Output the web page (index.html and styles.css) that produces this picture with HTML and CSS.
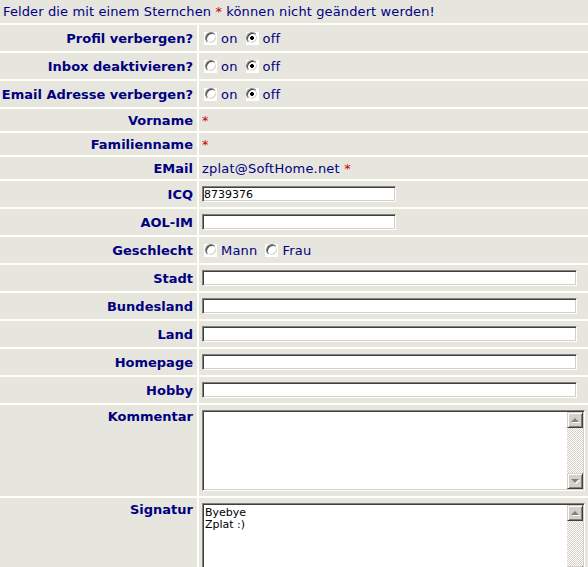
FILE: index.html
```html
<!DOCTYPE html>
<html lang="de">
<head>
    <meta charset="UTF-8">
    <title>Profil bearbeiten</title>
    <link rel="stylesheet" href="styles.css">
</head>
<body>
    <form class="profile">
        <div class="note"><span>Felder die mit einem Sternchen <span class="req">*</span> können nicht geändert werden!</span></div>

        <div class="row">
            <div class="key">Profil verbergen?</div>
            <div class="val">
                <label class="opt"><span class="rb"><input type="radio" name="hideprofile"></span>on</label>
                <label class="opt"><span class="rb"><input type="radio" name="hideprofile" checked></span>off</label>
            </div>
        </div>
        <div class="row">
            <div class="key">Inbox deaktivieren?</div>
            <div class="val">
                <label class="opt"><span class="rb"><input type="radio" name="noinbox"></span>on</label>
                <label class="opt"><span class="rb"><input type="radio" name="noinbox" checked></span>off</label>
            </div>
        </div>
        <div class="row">
            <div class="key">Email Adresse verbergen?</div>
            <div class="val">
                <label class="opt"><span class="rb"><input type="radio" name="hidemail"></span>on</label>
                <label class="opt"><span class="rb"><input type="radio" name="hidemail" checked></span>off</label>
            </div>
        </div>

        <div class="row short">
            <div class="key">Vorname</div>
            <div class="val"><span class="req">*</span></div>
        </div>
        <div class="row short">
            <div class="key">Familienname</div>
            <div class="val"><span class="req">*</span></div>
        </div>
        <div class="row short">
            <div class="key">EMail</div>
            <div class="val"><span>zplat@SoftHome.net <span class="req">*</span></span></div>
        </div>

        <div class="row">
            <div class="key">ICQ</div>
            <div class="val"><input class="field narrow" type="text" value="8739376"></div>
        </div>
        <div class="row">
            <div class="key">AOL-IM</div>
            <div class="val"><input class="field narrow" type="text"></div>
        </div>
        <div class="row">
            <div class="key">Geschlecht</div>
            <div class="val">
                <label class="opt"><span class="rb"><input type="radio" name="sex"></span>Mann</label>
                <label class="opt"><span class="rb"><input type="radio" name="sex"></span>Frau</label>
            </div>
        </div>
        <div class="row">
            <div class="key">Stadt</div>
            <div class="val"><input class="field wide" type="text"></div>
        </div>
        <div class="row">
            <div class="key">Bundesland</div>
            <div class="val"><input class="field wide" type="text"></div>
        </div>
        <div class="row">
            <div class="key">Land</div>
            <div class="val"><input class="field wide" type="text"></div>
        </div>
        <div class="row">
            <div class="key">Homepage</div>
            <div class="val"><input class="field wide" type="text"></div>
        </div>
        <div class="row">
            <div class="key">Hobby</div>
            <div class="val"><input class="field wide" type="text"></div>
        </div>

        <div class="row top">
            <div class="key">Kommentar</div>
            <div class="val">
                <div class="area">
                    <textarea></textarea>
                    <div class="sbar"><span class="sbtn up"></span><span class="sbtn down"></span></div>
                </div>
            </div>
        </div>
        <div class="row top">
            <div class="key">Signatur</div>
            <div class="val">
                <div class="area">
                    <textarea>Byebye
Zplat :)</textarea>
                    <div class="sbar"><span class="sbtn up"></span><span class="sbtn down"></span></div>
                </div>
            </div>
        </div>
    </form>
</body>
</html>
```

FILE: styles.css
```css
body {
    margin: 0;
    background-color: #fffff7;
    font-family: "DejaVu Sans", Verdana, sans-serif;
    font-size: 13px;
    color: #000080;
}
.profile {
    display: flex;
    flex-direction: column;
    gap: 2px;
}
.note {
    background: #e6e5de;
    height: 23px;
    padding-left: 3px;
    display: flex;
    align-items: center;
    letter-spacing: 0.12px;
}
.req {
    color: #cc0000;
}
.row {
    display: grid;
    grid-template-columns: 197px 1fr;
    column-gap: 2px;
    min-height: 26px;
}
.row.short {
    min-height: 22px;
}
.key, .val {
    background: #e6e5de;
    display: flex;
    align-items: center;
}
.key {
    justify-content: flex-end;
    padding-right: 4px;
    font-weight: bold;
}
.val {
    padding-left: 3px;
    letter-spacing: 0.2px;
}
.row.top .key {
    align-items: flex-start;
    padding-top: 4px;
}
.row.top .val {
    align-items: flex-start;
    padding-top: 5px;
    padding-bottom: 5px;
}

/* old windows style radio buttons */
.opt {
    display: inline-flex;
    align-items: center;
    margin-right: 6px;
}
.rb {
    display: inline-flex;
    align-items: center;
    justify-content: center;
    width: 13px;
    height: 13px;
    margin: 0 4px 0 2px;
    background: #fff;
}
.rb input {
    appearance: none;
    -webkit-appearance: none;
    margin: 0;
    width: 12px;
    height: 12px;
    box-sizing: border-box;
    border-radius: 50%;
    border: 1px solid;
    border-color: #808080 #fff #fff #808080;
    box-shadow: inset 1px 1px #404040, inset -1px -1px #d4d0c8;
    background: #fff;
}
.rb input:checked {
    background: radial-gradient(circle, #000 1.6px, #fff 2.2px);
}

.field {
    height: 16px;
    box-sizing: border-box;
    margin: 0;
    padding: 0 1px;
    border: 1px solid;
    border-color: #808080 #fff #fff #808080;
    box-shadow: inset 1px 1px #404040, inset -1px -1px #d4d0c8;
    background: #fff;
    font-family: "DejaVu Sans", Verdana, sans-serif;
    font-size: 11px;
    color: #000;
    outline: none;
}
.narrow {
    width: 194px;
}
.wide {
    width: 375px;
}

.area {
    display: flex;
    width: 383px;
    height: 81px;
    box-sizing: border-box;
    padding: 1px;
    border: 1px solid;
    border-color: #808080 #fff #fff #808080;
    box-shadow: inset 1px 1px #404040, inset -1px -1px #d4d0c8;
    background: #fff;
}
.area textarea {
    flex: 1;
    border: none;
    margin: 0;
    padding: 2px 1px;
    resize: none;
    overflow: hidden;
    outline: none;
    background: transparent;
    font-family: "DejaVu Sans", Verdana, sans-serif;
    font-size: 11px;
    line-height: 12px;
    color: #000;
}
.sbar {
    width: 16px;
    display: flex;
    flex-direction: column;
    justify-content: space-between;
    background: repeating-conic-gradient(#d4d0c8 0 25%, #fff 0 50%) 0 0 / 2px 2px;
}
.sbtn {
    width: 16px;
    height: 16px;
    box-sizing: border-box;
    display: flex;
    align-items: center;
    justify-content: center;
    background: #d4d0c8;
    border: 1px solid;
    border-color: #d4d0c8 #404040 #404040 #d4d0c8;
    box-shadow: inset 1px 1px #fff, inset -1px -1px #808080;
}
.sbtn::before {
    content: "";
    border-left: 4px solid transparent;
    border-right: 4px solid transparent;
    filter: drop-shadow(1px 1px 0 #fff);
}
.sbtn.up::before {
    border-bottom: 4px solid #808080;
}
.sbtn.down::before {
    border-top: 4px solid #808080;
}
```
